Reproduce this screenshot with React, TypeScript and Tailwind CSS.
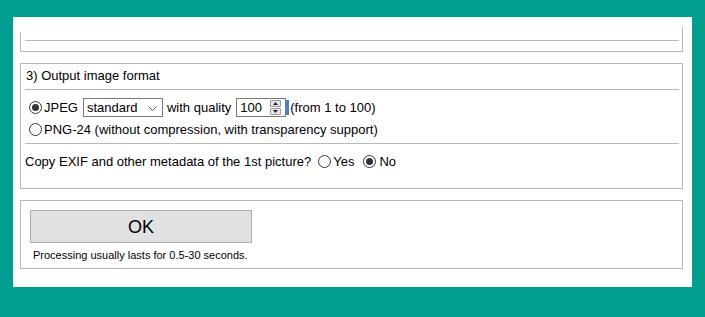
import React from "react";

const font = { fontFamily: '"Liberation Sans", Arial, sans-serif' };

function Radio({ checked }: { checked?: boolean }) {
  return (
    <span className="inline-flex h-[13px] w-[13px] shrink-0 items-center justify-center rounded-full border border-[#333333] bg-white">
      {checked ? <span className="h-[7px] w-[7px] rounded-full bg-[#333333]" /> : null}
    </span>
  );
}

export default function App() {
  return (
    <div
      className="h-[317px] w-[705px] overflow-hidden bg-[#009e8f] pl-[13px] pt-[17px] text-[13px] leading-[15px] text-black"
      style={font}
    >
      <div className="h-[270px] w-[679px] bg-white pl-[7px] pt-[10px]">
        {/* Box 1 (scrolled, top clipped) */}
        <div className="relative h-[25px] w-[663px] border-x border-b border-[#b9b9b9] pt-[13px]">
          <div className="absolute left-[-1px] top-0 h-[5px] w-px bg-white" />
          <div className="ml-[4px] mr-[3px] h-px bg-[#b9b9b9]" />
        </div>

        {/* Box 2 */}
        <div className="mt-[11px] h-[126px] w-[663px] border border-[#b9b9b9]">
          <div className="h-[25px] pl-[5px] pt-[4px]">3) Output image format</div>
          <div className="ml-[4px] mr-[3px] h-px bg-[#b9b9b9]" />

          <div className="mt-[8px] flex h-[19px] items-center pl-[8px]">
            <Radio checked />
            <span className="ml-[2px]">JPEG</span>
            <div className="ml-[5px] flex h-[19px] w-[80px] items-center justify-between border border-[#7a7a7a] pl-[3px] pr-[5px]">
              <span>standard</span>
              <svg width="9" height="5" viewBox="0 0 9 5" className="mt-[1px]">
                <path d="M0.5 0.5 L4.5 4.5 L8.5 0.5" fill="none" stroke="#555" strokeWidth="1" />
              </svg>
            </div>
            <span className="ml-[4px]">with quality</span>
            <div className="ml-[5px] flex h-[19px] w-[50px] items-center justify-between border border-[#7a7a7a] pl-[3px] pr-[4px]">
              <span>100</span>
              <div className="flex h-[15px] w-[11px] flex-col gap-px">
                <div className="flex h-[7px] items-center justify-center rounded-[1px] border border-[#9a9a9a] bg-[#e6e6e6]">
                  <svg width="5" height="3" viewBox="0 0 5 3">
                    <path d="M0 3 L2.5 0 L5 3 Z" fill="#222" />
                  </svg>
                </div>
                <div className="flex h-[7px] items-center justify-center rounded-[1px] border border-[#9a9a9a] bg-[#e6e6e6]">
                  <svg width="5" height="3" viewBox="0 0 5 3">
                    <path d="M0 0 L2.5 3 L5 0 Z" fill="#222" />
                  </svg>
                </div>
              </div>
            </div>
            <span className="h-[15px] w-[3px] bg-[#3c82d8]" />
            <span className="ml-[1px]">(from 1 to 100)</span>
          </div>

          <div className="mt-[4px] flex h-[17px] items-center pl-[8px]">
            <Radio />
            <span className="ml-[2px]">PNG-24 (without compression, with transparency support)</span>
          </div>

          <div className="ml-[4px] mr-[3px] mt-[5px] h-px bg-[#b9b9b9]" />

          <div className="mt-[9px] flex h-[17px] items-center pl-[4px]">
            <span>Copy EXIF and other metadata of the 1st picture?</span>
            <span className="ml-[7px] inline-flex"><Radio /></span>
            <span className="ml-[2px]">Yes</span>
            <span className="ml-[9px] inline-flex"><Radio checked /></span>
            <span className="ml-[3px]">No</span>
          </div>
        </div>

        {/* Box 3 */}
        <div className="mt-[11px] h-[69px] w-[663px] border border-[#b9b9b9]">
          <div className="ml-[9px] mt-[9px] flex h-[33px] w-[222px] items-center justify-center border border-[#adadad] bg-[#e1e1e1] text-[18px] leading-[20px]">
            OK
          </div>
          <div className="ml-[12px] mt-[6px] text-[11px] leading-[13px]">
            Processing usually lasts for 0.5-30 seconds.
          </div>
        </div>
      </div>
    </div>
  );
}
